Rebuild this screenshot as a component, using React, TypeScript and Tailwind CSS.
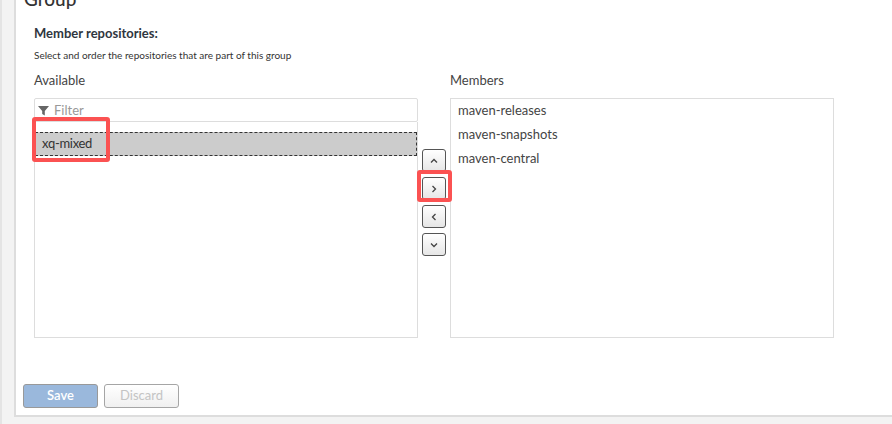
import React from "react";

const font = "font-['Lato','Open_Sans',sans-serif]";

const MoveButton = ({ d }: { d: string }) => (
  <button className="flex h-[23px] w-6 items-center justify-center rounded-[3px] border border-[#555] bg-gradient-to-b from-white to-[#e6e6e6]">
    <svg width="10" height="10" viewBox="0 0 10 10" fill="none" stroke="#444" strokeWidth="1.3">
      <path d={d} />
    </svg>
  </button>
);

const App: React.FC = () => {
  return (
    <div className={`${font} flex h-[424px] w-[892px] overflow-hidden bg-[#f3f3f3] text-[#333]`}>
      <div className="w-[2px] bg-[#e4e4e4]" />
      <div className="w-3 bg-[#f3f3f3]" />
      <div className="relative h-[417px] flex-1 border-b-2 border-l-2 border-[#dddddd] bg-white">
        <h1 className="-mt-[11px] ml-[8px] h-[26px] text-[19px] leading-[20px] font-medium text-[#333]">Group</h1>
        <div className="pl-[18px]">
          <div className="mt-[10px] text-[13px] leading-[16px] font-bold text-[#2f3640]">Member repositories:</div>
          <div className="mt-[8px] text-[10px] leading-[12px] text-[#333]">Select and order the repositories that are part of this group</div>
          <div className="mt-[11px] flex">
            <div className="w-[384px]">
              <div className="h-[18px] text-[13px] leading-[16px] text-[#444]">Available</div>
              <div className="mt-[8px] flex h-6 items-center gap-[5px] rounded-[2px] border border-[#dddddd] pt-px pl-[3px] text-[13px] text-[#999]">
                <svg width="11" height="11" viewBox="0 0 11 11" fill="#666">
                  <path d="M0 1h11L6.8 6v4.5L4.2 9V6z" />
                </svg>
                Filter
              </div>
              <div className="h-[216px] border border-t-0 border-[#dddddd] pt-[10px]">
                <div className="flex h-6 items-center border border-dashed border-[#333] bg-[#cccccc] pl-[6px] text-[13px] tracking-[-0.3px] text-[#333]">xq-mixed</div>
              </div>
            </div>
            <div className="mt-[77px] ml-1 flex w-6 flex-col gap-[5px]">
              <MoveButton d="M2 6.5L5 3.5L8 6.5" />
              <MoveButton d="M3.5 2L6.5 5L3.5 8" />
              <MoveButton d="M6.5 2L3.5 5L6.5 8" />
              <MoveButton d="M2 3.5L5 6.5L8 3.5" />
            </div>
            <div className="ml-1 w-[384px]">
              <div className="h-[18px] text-[13px] leading-[16px] text-[#444]">Members</div>
              <div className="mt-[8px] h-[240px] border border-[#dddddd] pl-[7px] text-[13px] leading-[24px] text-[#444]">
                <div className="-mt-px">maven-releases</div>
                <div>maven-snapshots</div>
                <div>maven-central</div>
              </div>
            </div>
          </div>
        </div>
        <div className="mt-[46px] ml-[7px] flex gap-[6px] text-[13px] font-semibold">
          <button className="h-6 w-[75px] rounded-[3px] border border-[#999] bg-[#9ab8dc] text-white">Save</button>
          <button className="h-6 w-[75px] rounded-[3px] border border-[#a5a5a5] bg-gradient-to-b from-white to-[#f0f0f0] font-normal text-[#c4c4c4]">Discard</button>
        </div>
        <div className="absolute top-[117px] left-[16px] h-[45px] w-[78px] rounded-[3px] border-4 border-[#fb5252]" />
        <div className="absolute top-[170px] left-[401px] h-[32px] w-[35px] rounded-[3px] border-4 border-[#fb5252]" />
      </div>
    </div>
  );
};

export default App;
